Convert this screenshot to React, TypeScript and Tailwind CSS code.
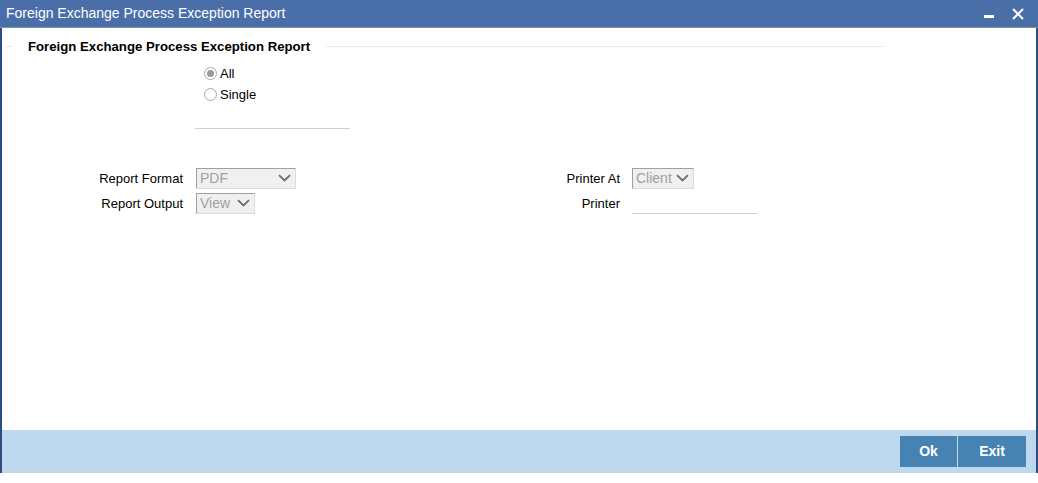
import React from 'react';

function Select({ value, width }: { value: string; width: string }) {
	return (
		<div
			className={`${width} h-[21px] flex items-center justify-between border border-[#a0a0a0] border-r-[#dcdcdc] border-b-[#dcdcdc] bg-[#f0f0f0] pl-[3px] pr-[4px] text-[14px] text-[#a0a0a0]`}
		>
			<span>{value}</span>
			<svg width="13" height="8" viewBox="0 0 13 8">
				<path d="M1 1.2 L6.5 6.5 L12 1.2" fill="none" stroke="#6b6b6b" strokeWidth="1.8" />
			</svg>
		</div>
	);
}

function Radio({ label, checked }: { label: string; checked?: boolean }) {
	return (
		<label className="flex items-center gap-[3px] h-[21px]">
			<span className="w-[13px] h-[13px] rounded-full border border-[#a8a8a8] bg-white flex items-center justify-center">
				{checked && <span className="w-[7px] h-[7px] rounded-full bg-[#9a9a9a]" />}
			</span>
			<span className="text-[13px] text-black">{label}</span>
		</label>
	);
}

export default function App() {
	return (
		<div
			className="w-[1038px] h-[483px] bg-white flex flex-col overflow-hidden"
			style={{ fontFamily: '"Liberation Sans", Arial, sans-serif' }}
		>
			<div className="h-[28px] bg-[#4a6ea8] flex items-center justify-between pl-[6px] pr-[14px] border-b border-[#7a93a8]">
				<span className="text-white text-[14px]">Foreign Exchange Process Exception Report</span>
				<div className="flex items-center gap-[18px] text-white">
					<span className="w-[10px] h-[3px] bg-white mt-[6px]" />
					<svg width="12" height="12" viewBox="0 0 12 12">
						<path d="M1 1 L11 11 M11 1 L1 11" stroke="white" strokeWidth="2" />
					</svg>
				</div>
			</div>

			<div className="flex-1 flex flex-col border-l-2 border-r-2 border-[#2b4d80]">
				<div className="flex-1 relative">
					<div className="flex items-center mt-[9px] ml-[4px] w-[878px]">
						<span className="w-[6px] h-px bg-[#e6e6e6]" />
						<span className="px-[16px] text-[13.2px] font-bold text-black">
							Foreign Exchange Process Exception Report
						</span>
						<span className="flex-1 h-px bg-[#ebebeb]" />
					</div>

					<div className="flex flex-col ml-[202px] mt-[6px]">
						<Radio label="All" checked />
						<Radio label="Single" />
					</div>

					<div className="ml-[193px] mt-[23px] w-[155px] h-px bg-[#cfcfcf]" />

					<div className="flex mt-[39px]">
						<div className="grid grid-cols-[181px_auto] gap-x-[13px] gap-y-[4px] items-center w-[560px]">
							<span className="text-right text-[13px] text-black">Report Format</span>
							<Select value="PDF" width="w-[100px]" />
							<span className="text-right text-[13px] text-black">Report Output</span>
							<Select value="View" width="w-[59px]" />
						</div>
						<div className="grid grid-cols-[58px_auto] gap-x-[12px] gap-y-[4px] items-center">
							<span className="text-right text-[13px] text-black">Printer At</span>
							<Select value="Client" width="w-[62px]" />
							<span className="text-right text-[13px] text-black">Printer</span>
							<div className="w-[125px] h-[21px] border-b border-[#cfcfcf]" />
						</div>
					</div>
				</div>

				<div className="h-[43px] bg-[#bed9ed] flex items-center justify-end pr-[10px]">
					<div className="flex gap-px">
						<button className="w-[57px] h-[31px] bg-[#4683b2] text-white text-[14px] font-bold">Ok</button>
						<button className="w-[68px] h-[31px] bg-[#4683b2] text-white text-[14px] font-bold">Exit</button>
					</div>
				</div>
			</div>
			<div className="h-[10px] bg-white" />
		</div>
	);
}
